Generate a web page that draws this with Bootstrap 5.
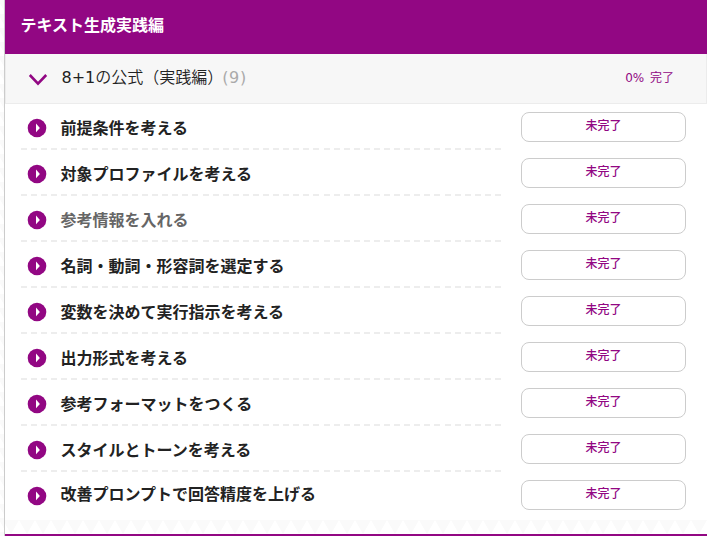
<!DOCTYPE html>
<html lang="ja">
<head>
<meta charset="utf-8">
<meta name="viewport" content="width=device-width, initial-scale=1">
<title>テキスト生成実践編</title>
<link href="https://cdn.jsdelivr.net/npm/bootstrap@5.3.0/dist/css/bootstrap.min.css" rel="stylesheet">
<style>
:root{--plum:#920783}
body{font-family:"DejaVu Sans","Noto Sans CJK JP",sans-serif;font-size:16px;color:#222;height:536px;background:#fff}
.jp{font-family:"Noto Sans CJK JP",sans-serif}
.edge{width:4px;flex:none}
.course{border-left:1px solid #ccc;min-width:0}
.course-head{height:54px;background:var(--plum);padding:0 0 6px 15.5px;line-height:24px}
.section-head{height:50px;background:#f7f7f7;border:1px solid #ececec;border-top:0;padding:0 32px 2px 22px}
.section-name{margin-left:13.5px;padding-bottom:2px;line-height:24px;font-weight:350}
.latin{font-family:"DejaVu Sans",sans-serif;font-weight:400}
.count{color:#aaa;margin-left:-1px;letter-spacing:.6px}
.progress-note{font-size:12px;color:var(--plum);word-spacing:2px}
.lessons{height:416px;padding:0 21px 0 16px}
.lesson{height:46px}
.lesson-main{width:480px;height:46px;padding-left:6px;background:repeating-linear-gradient(90deg,#ededed 0 6px,transparent 6px 10.085px) 0 100%/100% 2px no-repeat}
.lesson:last-child .lesson-main{background:none}
.lesson:last-child .lesson-name{padding-bottom:5px}
.lesson-main svg{margin-top:2px}
.lesson-name{margin-left:13.5px;line-height:24px}
.muted-name{color:#666}
.state{width:165px;height:30px;border:1px solid #ccc;border-radius:8px;font-size:12px;font-weight:500;color:var(--plum);margin-top:8px;padding:0 0 5px;line-height:18px;background:#fff}
.foot{height:14px}
.bottom-line{height:2px;background:var(--plum)}
</style>
<script src="https://cdn.jsdelivr.net/npm/bootstrap@5.3.0/dist/js/bootstrap.bundle.min.js"></script>
</head>
<body class="overflow-hidden">
<svg width="0" height="0" class="position-absolute">
<defs>
<pattern id="tri" width="16" height="14" patternUnits="userSpaceOnUse" x="-5" y="0"><path d="M3 0H19L11 14zM-13 0H3L-5 14z" fill="#fafafa"/></pattern>
<symbol id="play" viewBox="0 0 20 20"><circle cx="10" cy="10" r="9.3" fill="#920783"/><path d="M9 5.5l3.9 4.6L9 14.3z" fill="#fff"/></symbol>
</defs>
</svg>
<main class="d-flex h-100">
<svg class="edge h-100"><rect width="4" height="536" fill="url(#tri)"/></svg>
<section class="course flex-grow-1">
<header class="course-head jp d-flex align-items-center text-white fw-bold">テキスト生成実践編</header>
<div class="section-head d-flex align-items-center">
<svg width="20" height="14" viewBox="0 0 20 14" fill="none" stroke="#920783" stroke-width="2.6" class="mt-1"><path d="M1.8 2L10 10.7 18.2 2"/></svg>
<div class="section-name"><span class="latin">8+1</span><span class="jp">の公式（実践編）</span><span class="count latin">(9)</span></div>
<div class="progress-note ms-auto">0% 完了</div>
</div>
<div class="lessons jp" id="lessons"></div>
<svg class="foot d-block w-100"><rect width="100%" height="14" fill="url(#tri)"/></svg>
<div class="bottom-line"></div>
</section>
</main>
<script>
const names = ["前提条件を考える","対象プロファイルを考える","参考情報を入れる","名詞・動詞・形容詞を選定する","変数を決めて実行指示を考える","出力形式を考える","参考フォーマットをつくる","スタイルとトーンを考える","改善プロンプトで回答精度を上げる"];
document.getElementById("lessons").innerHTML = names.map((n, i) =>
`<div class="lesson d-flex justify-content-between">
<div class="lesson-main d-flex align-items-center">
<svg width="20" height="20"><use href="#play"/></svg>
<span class="lesson-name fw-bold ${i === 2 ? "muted-name" : ""}">${n}</span>
</div>
<div class="state d-flex align-items-center justify-content-center">未完了</div>
</div>`).join("");
</script>
</body>
</html>
